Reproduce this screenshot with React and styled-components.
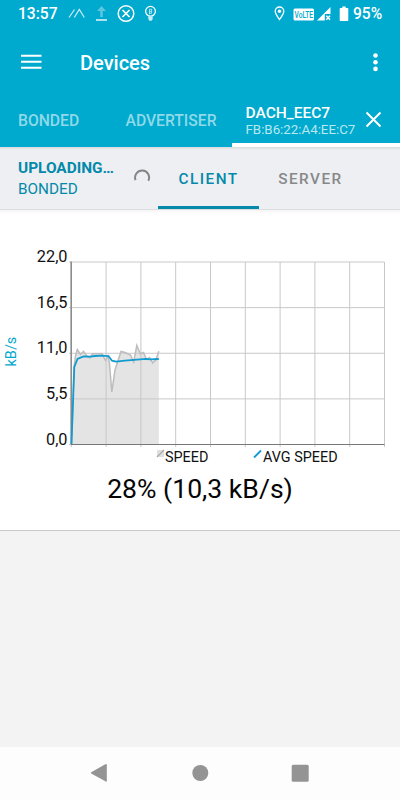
import styled, { createGlobalStyle } from "styled-components";

const GlobalStyle = createGlobalStyle`
    * {
        box-sizing: border-box;
    }
    body {
        margin: 0;
        font-family: Roboto, "Liberation Sans", sans-serif;
        background: #f3f3f3;
    }
`

const Screen = styled.div`
    width: 400px;
    height: 800px;
    display: flex;
    flex-direction: column;
    overflow: hidden;
    background: #f3f3f3;
`

const Header = styled.header`
    height: 147px;
    flex-shrink: 0;
    display: flex;
    flex-direction: column;
    background: #00a9ce;
    color: #fff;
`

const StatusBar = styled.div`
    height: 28px;
    display: flex;
    align-items: center;
    justify-content: space-between;
    padding: 0 18px;
`

const StatusGroup = styled.div`
    height: 28px;
    display: flex;
    align-items: center;
`

const StatusText = styled.span`
    width: ${props => props.$width};
    font-size: 15.6px;
    font-weight: 500;
    line-height: 29px;
`

const Toolbar = styled.div`
    height: 68px;
    display: flex;
    align-items: center;
    padding: 0 16px 0 20px;
`

const Title = styled.h1`
    flex: 1;
    margin: 2px 0 0 38px;
    font-size: 20px;
    font-weight: 500;
    line-height: 24px;
`

const DeviceTabs = styled.nav`
    height: 51px;
    display: flex;
`

const DeviceTab = styled.div`
    width: ${props => props.$width};
    padding: 0 0 2px 18px;
    display: flex;
    align-items: center;
    font-size: 15.7px;
    font-weight: 500;
    white-space: nowrap;
    color: #8fd9e9;
`

const ActiveTab = styled.div`
    width: 168px;
    height: 51px;
    padding: 9px 18px 0 13.5px;
    display: flex;
    justify-content: space-between;
    border-bottom: 4px solid #fff;
    white-space: nowrap;
`

const DeviceName = styled.div`
    font-size: 15.5px;
    font-weight: 500;
    line-height: 17px;
`

const DeviceAddress = styled.div`
    font-size: 13.3px;
    line-height: 15px;
    color: #b9e8f1;
`

const CloseIcon = styled.svg`
    margin-top: 6px;
`

const SubBar = styled.div`
    height: 63px;
    flex-shrink: 0;
    display: flex;
    background: linear-gradient(#d5dbdd 0, #eeeff2 3px);
    border-bottom: 1px solid #dcdddf;
`

const Connection = styled.div`
    width: 158px;
    padding: 11px 7px 0 18px;
    display: flex;
    justify-content: space-between;
    color: #0389aa;
`

const State = styled.div`
    font-size: ${props => props.$bold ? "15.4px" : "15.3px"};
    font-weight: ${props => props.$bold ? 700 : 400};
    line-height: 21px;
`

const Spinner = styled.svg`
    margin-top: 10px;
`

const ModeTab = styled.div`
    width: ${props => props.$width};
    height: 62px;
    padding-top: 4px;
    display: flex;
    align-items: center;
    justify-content: center;
    border-bottom: 3px solid ${props => props.$active ? "#0389aa" : "transparent"};
    font-size: 15.3px;
    font-weight: 500;
    letter-spacing: 1.5px;
    color: ${props => props.$active ? "#0389aa" : "#87888a"};
`

const Card = styled.section`
    height: 321px;
    flex-shrink: 0;
    display: flex;
    flex-direction: column;
    background: linear-gradient(#f5f5f5 0, #fff 4px);
    border-bottom: 1px solid #c8cac9;
`

const Chart = styled.svg`
    display: block;
    flex-shrink: 0;
    text {
        font-family: Roboto, "Liberation Sans", sans-serif;
        font-size: 16.3px;
        fill: #111;
    }
`

const Legend = styled.div`
    height: 16px;
    padding-left: 156px;
    display: flex;
    gap: 44.5px;
`

const LegendItem = styled.div`
    display: flex;
    align-items: flex-start;
    font-size: 14.4px;
    line-height: 18px;
    color: #111;
    white-space: nowrap;
`

const Summary = styled.div`
    margin-top: 8px;
    font-size: 26.6px;
    line-height: 32px;
    text-align: center;
    color: #050505;
`

const Content = styled.div`
    flex: 1;
`

const NavBar = styled.footer`
    height: 53px;
    display: flex;
    align-items: center;
    justify-content: space-between;
    padding: 0 91px 1px 90px;
    background: #fdfdfd;
`

const PLOT = { left: 71.3, right: 384.5, top: 52, bottom: 234.5 }

const yLabels = ["22,0", "16,5", "11,0", "5,5", "0,0"]

const speed = [
    [71.5, 234], [74, 157], [75.5, 146], [77.3, 139.5], [80.5, 144.5], [83.5, 141.3], [87, 146],
    [90, 148], [92.5, 143.8], [102, 143.8], [105.5, 150.5], [108, 146], [109.3, 152], [111.8, 182],
    [115, 160], [121, 141.5], [125, 142.5], [130.5, 145], [133.7, 152], [136.8, 135.3], [140.3, 144],
    [143.5, 142.5], [146.5, 149.5], [149.7, 147.5], [152.7, 153], [156, 149.5], [158.8, 141.3],
]

const average = [
    [71.5, 234], [74.3, 157], [77.5, 149], [83.5, 146.5], [90, 146.7], [95, 146], [102, 145.6],
    [108.5, 146], [112, 150.7], [116, 151.6], [125, 150.6], [137, 149.6], [146, 148.8], [150, 149.3], [158.8, 149],
]

const toPoints = (list) => list.map(point => point.join(",")).join(" ")

function SpeedChart () {
    const stepX = (PLOT.right - PLOT.left) / 9
    const stepY = (PLOT.bottom - PLOT.top) / 4

    return(
        <Chart width="400" height="239" viewBox="0 0 400 239">
            <polygon points={`${toPoints(speed)} 158.8,234.5 71.5,234.5`} fill="#e4e4e4" />
            {[...Array(10)].map((_, i) => {
                const x = PLOT.left + stepX * i
                return <line key={i} x1={x} x2={x} y1={PLOT.top} y2="237" stroke="#c8c8c8" />
            })}
            {yLabels.map((label, i) => {
                const y = PLOT.top + stepY * i
                return (
                    <g key={label}>
                        <line x1="69" x2={PLOT.right} y1={y} y2={y} stroke="#c8c8c8" />
                        <text x="67.5" y={y} textAnchor="end">{label}</text>
                    </g>
                )
            })}
            <polyline points={toPoints(speed)} fill="none" stroke="#bdbdbd" strokeWidth="1.5" />
            <path d="M71.2 51.5V234.5" stroke="#888" strokeWidth="1.5" />
            <path d="M71 234.5H384.5" stroke="#777" />
            <polyline points={toPoints(average)} fill="none" stroke="#109bd1" strokeWidth="1.8" />
            <text transform="translate(16 156.5) rotate(-90)" style={{ fill: "#00a9ce", fontSize: 14.5 }}>kB/s</text>
        </Chart>
    );
}

function StatusIcons () {
    return(
        <svg width="102" height="28" viewBox="0 0 102 28" fill="none" stroke="#fff">
            <path d="M12 17.5L17.5 9.5M17.3 17.5L22.3 9.5L27.3 17.5" strokeWidth="1.2" opacity=".8" />
            <path d="M44.5 17V9" stroke="#5cc7de" strokeWidth="2.5" />
            <path d="M40 11L44.5 6L49 11Z" fill="#5cc7de" stroke="none" />
            <path d="M39 20H50" strokeWidth="1.6" opacity=".85" />
            <circle cx="69" cy="13.5" r="7.8" strokeWidth="1.5" />
            <path d="M65.5 10L72.5 17M72.5 10L65.5 17" strokeWidth="1.7" />
            <circle cx="93.5" cy="11.3" r="4.9" strokeWidth="1.3" />
            <path d="M91.3 16.5H95.7V19L94.7 20.7H92.3L91.3 19Z" fill="#c8edf5" stroke="none" />
            <path d="M92.5 14.3V9.2H94.6V11.4H92.8M94.6 11.4V13.3H92.6" strokeWidth=".8" opacity=".8" />
        </svg>
    );
}

function App () {
    return(
        <>
            <GlobalStyle />
            <Screen>
                <Header>
                    <StatusBar>
                        <StatusGroup>
                            <StatusText $width="39px">13:57</StatusText>
                            <StatusIcons />
                        </StatusGroup>
                        <StatusGroup>
                            <svg width="79" height="28" viewBox="0 0 79 28" fill="#fff">
                                <path d="M5.5 19.5C3.4 16.5 1.2 14 1.2 11.3A4.3 4.3 0 0 1 9.8 11.3C9.8 14 7.6 16.5 5.5 19.5Z" fill="none" stroke="#fff" strokeWidth="1.3" />
                                <circle cx="5.5" cy="11.3" r="1.7" />
                                <rect x="19.5" y="8.5" width="20.5" height="12" rx="1.5" />
                                <text x="20.5" y="18" fontSize="9.8" fontWeight="500" fill="#00a9ce" textLength="18.5" lengthAdjust="spacingAndGlyphs">VoLTE</text>
                                <path d="M43 20.5L56.5 7V14H50.8V20.5Z" />
                                <path d="M52.3 15.8L56 19.7M56 15.8L52.3 19.7" stroke="#fff" strokeWidth="1.5" />
                                <path d="M66.5 8H68.3V6.5H71.7V8H73.5Q74.3 8 74.3 8.7V20.3Q74.3 21 73.6 21H66.4Q65.7 21 65.7 20.3V8.7Q65.7 8 66.5 8Z" />
                            </svg>
                            <StatusText $width="29px">95%</StatusText>
                        </StatusGroup>
                    </StatusBar>
                    <Toolbar>
                        <svg width="22" height="16" viewBox="0 0 22 16" stroke="#fff" strokeWidth="2">
                            <path d="M1 1.8H21.5M1 7.8H21.5M1 13.8H21.5" />
                        </svg>
                        <Title>Devices</Title>
                        <svg width="16" height="20" viewBox="0 0 16 20" fill="#fff">
                            <circle cx="7.5" cy="3.5" r="2.3" />
                            <circle cx="7.5" cy="10.2" r="2.3" />
                            <circle cx="7.5" cy="16.9" r="2.3" />
                        </svg>
                    </Toolbar>
                    <DeviceTabs>
                        <DeviceTab $width="107.5px">BONDED</DeviceTab>
                        <DeviceTab $width="124.5px">ADVERTISER</DeviceTab>
                        <ActiveTab>
                            <div>
                                <DeviceName>DACH_EEC7</DeviceName>
                                <DeviceAddress>FB:B6:22:A4:EE:C7</DeviceAddress>
                            </div>
                            <CloseIcon width="17" height="17" viewBox="0 0 17 17" stroke="#fff" strokeWidth="2">
                                <path d="M1.5 1.5L15.5 15.5M15.5 1.5L1.5 15.5" />
                            </CloseIcon>
                        </ActiveTab>
                    </DeviceTabs>
                </Header>
                <SubBar>
                    <Connection>
                        <div>
                            <State $bold>UPLOADING…</State>
                            <State>BONDED</State>
                        </div>
                        <Spinner width="18" height="18" viewBox="0 0 18 18" fill="none" stroke="#858585" strokeWidth="2">
                            <path d="M2.6 12.2A7 7 0 1 1 15.3 12.8" />
                        </Spinner>
                    </Connection>
                    <ModeTab $width="101px" $active>CLIENT</ModeTab>
                    <ModeTab $width="103px">SERVER</ModeTab>
                </SubBar>
                <Card>
                    <SpeedChart />
                    <Legend>
                        <LegendItem>
                            <svg width="9" height="10" viewBox="0 0 9 10">
                                <rect x="1" y="1" width="7" height="7" fill="#dfdfdf" />
                                <path d="M1 8L8 1" stroke="#aaa" strokeWidth="1.3" />
                            </svg>
                            SPEED
                        </LegendItem>
                        <LegendItem>
                            <svg width="10" height="10" viewBox="0 0 10 10">
                                <path d="M1 8.5L8 1.5" stroke="#109bd1" strokeWidth="1.8" />
                            </svg>
                            AVG SPEED
                        </LegendItem>
                    </Legend>
                    <Summary>28% (10,3 kB/s)</Summary>
                </Card>
                <Content />
                <NavBar>
                    <svg width="18" height="20" viewBox="0 0 18 20" fill="#949494">
                        <path d="M1.2 9.2L15.8 1.1Q16.8 .8 16.8 1.8V18Q16.8 19 15.8 18.6L1.2 10.4Q.5 9.8 1.2 9.2Z" />
                    </svg>
                    <svg width="18" height="18" viewBox="0 0 18 18" fill="#949494">
                        <circle cx="9.3" cy="9" r="8" />
                    </svg>
                    <svg width="18" height="18" viewBox="0 0 18 18" fill="#949494">
                        <rect x=".7" y=".7" width="17" height="17" rx="1.5" />
                    </svg>
                </NavBar>
            </Screen>
        </>
    );
}
export default App;
